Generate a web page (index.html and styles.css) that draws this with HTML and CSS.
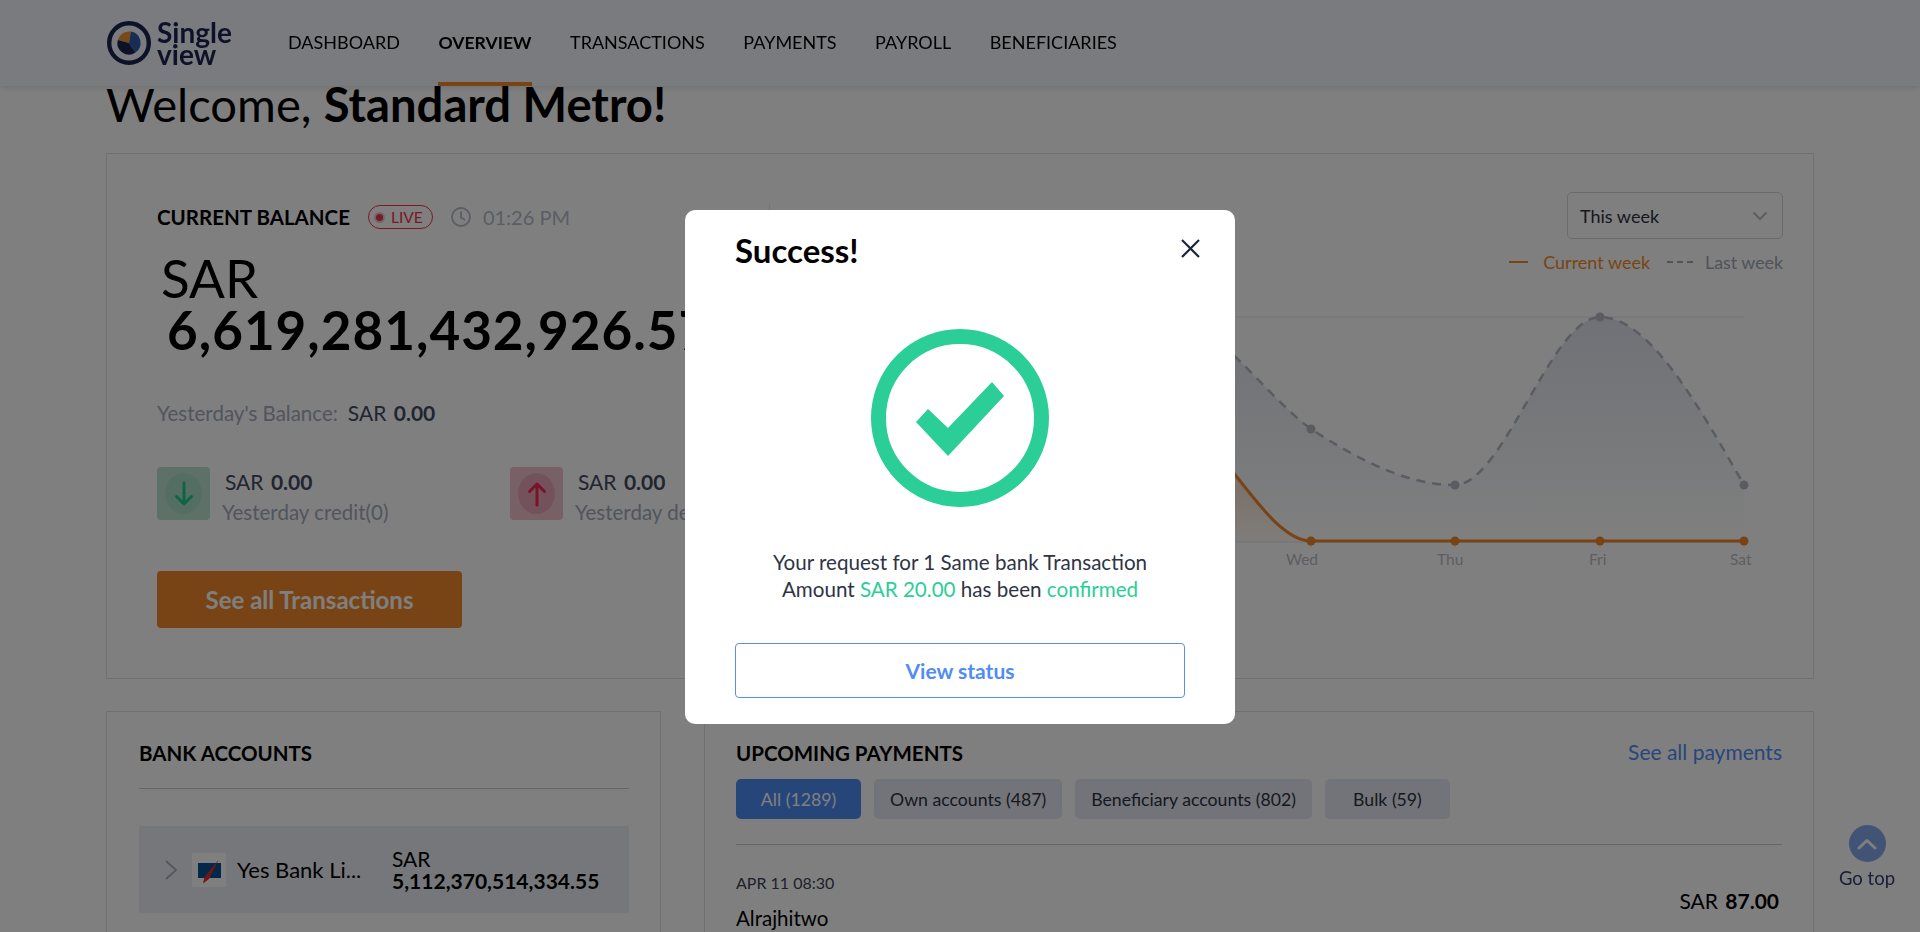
FILE: index.html
```html
<!DOCTYPE html>
<html lang="en">
<head>
<meta charset="utf-8">
<title>Single view - Overview</title>
<link rel="stylesheet" href="styles.css">
</head>
<body>
<header class="topbar">
  <div class="logo">
    <svg class="logo-mark" width="46" height="46" viewBox="0 0 46 46">
      <circle cx="23" cy="23" r="19.8" fill="none" stroke="#1c2550" stroke-width="4.400"/>
      <path d="M23 23 L11.800 20 A11.600 11.600 0 0 1 25 11.600 Z" fill="#f59331"/>
      <path d="M23 23 L25 11.600 A11.600 11.600 0 0 1 29.500 32.600 Z" fill="#2f5bab"/>
      <path d="M23 23 L29.500 32.600 A11.600 11.600 0 0 1 11.800 20 Z" fill="#1c2550"/>
    </svg>
    <div class="logo-text">Single<br>view</div>
  </div>
  <nav class="nav">
    <a class="nav-item">DASHBOARD</a>
    <a class="nav-item active">OVERVIEW</a>
    <a class="nav-item">TRANSACTIONS</a>
    <a class="nav-item">PAYMENTS</a>
    <a class="nav-item">PAYROLL</a>
    <a class="nav-item">BENEFICIARIES</a>
  </nav>
</header>

<main class="page">
  <h1 class="welcome">Welcome, <b>Standard Metro!</b></h1>

  <section class="card balance-card">
    <div class="balance-col">
      <div class="balance-head">
        <h2 class="section-title">CURRENT BALANCE</h2>
        <span class="live"><i class="live-dot"></i>LIVE</span>
        <svg class="clock" width="20" height="20" viewBox="0 0 20 20"><circle cx="10" cy="10" r="9" fill="none" stroke="#b4bac8" stroke-width="1.8"/><path d="M10 4.500V10.500L14 13" fill="none" stroke="#b4bac8" stroke-width="1.8"/></svg>
        <span class="time">01:26 PM</span>
      </div>
      <div class="amount">
        <div class="amount-cur">SAR</div>
        <div class="amount-val">6,619,281,432,926.57</div>
      </div>
      <div class="yesterday"><span class="muted">Yesterday's Balance:</span><span class="money">SAR <b>0.00</b></span></div>
      <div class="flows">
        <div class="flow">
          <div class="tile tile-green"><span class="tile-in">
            <svg width="20" height="26" viewBox="0 0 20 26"><path d="M10 2V23M2.500 15.500L10 23L17.500 15.500" fill="none" stroke="#1cc98e" stroke-width="3" stroke-linecap="round" stroke-linejoin="round"/></svg>
          </span></div>
          <div class="flow-text"><div class="flow-amt">SAR <b>0.00</b></div><div class="muted">Yesterday credit(0)</div></div>
        </div>
        <div class="flow">
          <div class="tile tile-red"><span class="tile-in">
            <svg width="20" height="26" viewBox="0 0 20 26"><path d="M10 24V3M2.500 10.500L10 3L17.500 10.500" fill="none" stroke="#f0284f" stroke-width="3" stroke-linecap="round" stroke-linejoin="round"/></svg>
          </span></div>
          <div class="flow-text"><div class="flow-amt">SAR <b>0.00</b></div><div class="muted">Yesterday debit(0)</div></div>
        </div>
      </div>
      <button class="btn-primary">See all Transactions</button>
    </div>

    <div class="chart-col">
      <div class="chart-head">
        <h2 class="section-title">CASH PERFORMANCE</h2>
        <div class="select">This week
          <svg width="16" height="10" viewBox="0 0 16 10"><path d="M1.500 1.500L8 8L14.500 1.500" fill="none" stroke="#b9bcc4" stroke-width="2"/></svg>
        </div>
      </div>
      <div class="legend">
        <span class="leg-line"></span><span class="leg-cur">Current week</span>
        <span class="leg-dash"></span><span class="leg-last">Last week</span>
      </div>
      <svg class="chart" width="981" height="300" viewBox="802 275 981 300">
        <defs>
          <linearGradient id="gGrey" x1="0" y1="0" x2="0" y2="1"><stop offset="0" stop-color="#d6dce8" stop-opacity=".8"/><stop offset="1" stop-color="#d6dce8" stop-opacity="0"/></linearGradient>
          <linearGradient id="gOrange" x1="0" y1="0" x2="0" y2="1"><stop offset="0" stop-color="#f59331" stop-opacity=".35"/><stop offset="1" stop-color="#f59331" stop-opacity=".05"/></linearGradient>
        </defs>
        <path d="M878 316H1744M878 541H1744" stroke="#eef0f5" stroke-width="1.500"/>
        <path d="M1311 541v5M1455 541v5M1600 541v5M1744 541v5" stroke="#d5d8df" stroke-width="1"/>
        <path d="M1166 316C1214 316 1263 393 1311 428C1359 459 1407 484 1455 484C1503 484 1552 316 1600 316C1648 316 1696 400 1744 484V541H1166Z" fill="url(#gGrey)"/>
        <path d="M1166 416C1214 416 1263 540 1311 540V541H1166Z" fill="url(#gOrange)"/>
        <path d="M1166 316C1214 316 1263 393 1311 428C1359 459 1407 484 1455 484C1503 484 1552 316 1600 316C1648 316 1696 400 1744 484" fill="none" stroke="#b4b9c4" stroke-width="2.500" stroke-dasharray="9 7"/>
        <g fill="#b4b9c4"><circle cx="1311" cy="428" r="4.500"/><circle cx="1455" cy="484" r="4.500"/><circle cx="1600" cy="316" r="4.500"/><circle cx="1744" cy="484" r="4.500"/></g>
        <path d="M1166 416C1214 416 1263 540 1311 540H1744" fill="none" stroke="#f0892a" stroke-width="3"/>
        <g fill="#f0892a"><circle cx="1311" cy="540" r="4.500"/><circle cx="1455" cy="540" r="4.500"/><circle cx="1600" cy="540" r="4.500"/><circle cx="1744" cy="540" r="4.500"/></g>
        <g class="tick-labels"><text x="1286" y="564">Wed</text><text x="1437" y="564">Thu</text><text x="1589" y="564">Fri</text><text x="1730" y="564">Sat</text></g>
      </svg>
    </div>
  </section>

  <div class="lower">
    <section class="card accounts">
      <h2 class="section-title">BANK ACCOUNTS</h2>
      <div class="rule rule-accounts"></div>
      <div class="account-row">
        <svg width="14" height="22" viewBox="0 0 14 22"><path d="M2 2L12 11L2 20" fill="none" stroke="#a8adba" stroke-width="1.800"/></svg>
        <span class="bank-logo">
          <svg width="34" height="34" viewBox="0 0 34 34"><rect x="6" y="10" width="23" height="15" fill="#04528f"/><path d="M26.500 7L17 26L11 30.500L12.500 24Z" fill="#e62a2a"/></svg>
        </span>
        <span class="bank-name">Yes Bank Li...</span>
        <div class="bank-amt">SAR<br><b>5,112,370,514,334.55</b></div>
      </div>
    </section>

    <section class="card upcoming">
      <div class="up-head">
        <h2 class="section-title">UPCOMING PAYMENTS</h2>
        <a class="see-all">See all payments</a>
      </div>
      <div class="pills">
        <span class="pill pill-on">All (1289)</span>
        <span class="pill">Own accounts (487)</span>
        <span class="pill">Beneficiary accounts (802)</span>
        <span class="pill">Bulk (59)</span>
      </div>
      <div class="rule rule-up"></div>
      <div class="pay-row">
        <div><div class="pay-date">APR 11 08:30</div><div class="pay-name">Alrajhitwo</div></div>
        <div class="pay-amt">SAR <b>87.00</b></div>
      </div>
    </section>
  </div>
</main>

<a class="go-top">
  <span class="go-top-dot"><svg width="20" height="12" viewBox="0 0 20 12"><path d="M2 10L10 2.500L18 10" fill="none" stroke="#fff" stroke-width="3" stroke-linecap="round" stroke-linejoin="round"/></svg></span>
  Go top
</a>

<div class="overlay">
  <div class="modal">
    <div class="modal-head">
      <h2 class="modal-title">Success!</h2>
      <svg class="modal-close" width="21" height="21" viewBox="0 0 21 21"><path d="M2 2L19 19M19 2L2 19" fill="none" stroke="#1d2440" stroke-width="2.200"/></svg>
    </div>
    <svg class="tick" width="178" height="178" viewBox="0 0 178 178">
      <circle cx="89" cy="89" r="81.500" fill="none" stroke="#2bce97" stroke-width="15"/>
      <path d="M45 93L57 80L77 99L121 53L133 67L77 127Z" fill="#2bce97"/>
    </svg>
    <p class="modal-msg">Your request for 1 Same bank Transaction<br>Amount <span class="ok">SAR 20.00</span> has been <span class="ok">confirmed</span></p>
    <button class="btn-outline">View status</button>
  </div>
</div>
</body>
</html>
```

FILE: styles.css
```css
* { box-sizing: border-box; }
html, body { margin: 0; height: 932px; overflow: hidden; }
body { background: #fff; color: #000; font-family: Lato, "Noto Sans", sans-serif; font-size: 20.500px; }
h1, h2, p { margin: 0; }

.topbar { position: fixed; top: 0; left: 0; right: 0; height: 86px; z-index: 2; display: flex; padding-left: 106px; background: #f4f7ff; box-shadow: 0 2px 6px rgba(0,0,0,.12); }
.logo { width: 182px; display: flex; align-items: center; gap: 5px; }
.logo-text { font-size: 28px; line-height: 22px; font-weight: 700; color: #1c2550; }
.nav { display: flex; gap: 38.500px; }
.nav-item { height: 86px; display: flex; align-items: center; padding-top: 2px; border-bottom: 4px solid transparent; font-size: 18px; color: #000; }
.nav-item.active { font-size: 17.600px; font-weight: 700; border-bottom-color: #f0892a; }

.page { padding: 77px 106px 0 106px; }
.welcome { font-size: 47.200px; line-height: 54px; font-weight: 400; margin-bottom: 22px; }
.welcome b { font-weight: 700; }
.card { border: 1px solid #dfe1e6; }
.section-title { font-size: 20.500px; line-height: 26px; font-weight: 700; white-space: nowrap; }

.balance-card { display: flex; height: 526px; padding: 38px 31px 0 50px; }
.balance-col { width: 613px; flex: none; margin: 12px 32px 0 0; height: 424px; border-right: 1px solid #e7e9ee; }
.balance-head { display: flex; align-items: center; height: 26px; }
.live { display: flex; align-items: center; gap: 8px; width: 65px; height: 24px; margin-left: 18px; padding-left: 7px; border: 1px solid #f0324f; border-radius: 12px; color: #f0324f; font-size: 15.500px; }
.live-dot { width: 7px; height: 7px; border-radius: 50%; background: #f0324f; box-shadow: 0 0 0 2px #e9c8d0; }
.clock { margin-left: 18px; }
.time { margin-left: 12px; color: #b4bac8; font-size: 20px; }
.amount { margin: 22px 0 0 4px; font-size: 53px; line-height: 52px; white-space: nowrap; }
.amount-val { margin-left: 6px; font-weight: 700; letter-spacing: 1px; }
.yesterday { margin-top: 45px; display: flex; gap: 10px; line-height: 24px; }
.muted { color: #a4aab9; }
.money, .flow-amt { color: #434a5e; font-size: 21px; word-spacing: 2px; }
.flows { margin-top: 42px; display: flex; }
.flow { width: 353px; flex: none; display: flex; gap: 12px; white-space: nowrap; }
.tile { width: 53px; height: 53px; border-radius: 4px; display: flex; align-items: center; justify-content: center; }
.tile-green { background: #bde3d3; }
.tile-red { background: #efc3cd; }
.tile-in { width: 37px; height: 41px; border-radius: 50%; display: flex; align-items: center; justify-content: center; }
.tile-green .tile-in { background: #a9ddc7; }
.tile-red .tile-in { background: #e9a5b6; }
.flow-text { line-height: 30px; }
.flow-amt { margin-left: 3px; }
.btn-primary { display: block; margin-top: 44px; width: 305px; height: 57px; border: 0; border-radius: 4px; background: #f0892a; color: #fff; font: 700 24px Lato, sans-serif; }

.chart-col { flex: 1; display: flex; flex-direction: column; }
.chart-head { display: flex; justify-content: space-between; align-items: flex-start; }
.chart-head .section-title { margin-top: 12px; }
.select { width: 216px; height: 47px; display: flex; align-items: center; justify-content: space-between; padding: 0 14px 0 12px; border: 1px solid #d3d7e2; border-radius: 5px; background: #fff; font-size: 18px; color: #2c3140; }
.legend { margin-top: 11px; height: 24px; display: flex; align-items: center; justify-content: flex-end; font-size: 18px; }
.leg-line { width: 19px; height: 2px; background: #f0892a; }
.leg-cur { margin-left: 15px; color: #f0892a; }
.leg-dash { width: 26px; height: 2px; margin-left: 17px; background: repeating-linear-gradient(90deg, #a0a6b5 0 6px, transparent 6px 10px); }
.leg-last { margin-left: 12px; color: #a0a6b5; font-size: 17.800px; }
.chart { display: block; margin-top: 2px; flex: none; }
.tick-labels { font-size: 15.500px; fill: #b8bdc8; }

.lower { display: flex; gap: 43px; margin-top: 32px; }
.accounts { width: 555px; height: 420px; flex: none; padding: 28px 31px 0 32px; }
.rule { height: 1px; background: #c9ccd3; }
.rule-accounts { margin-top: 22px; }
.account-row { margin-top: 37px; height: 87px; display: flex; align-items: center; background: #eceff5; padding-left: 25px; }
.bank-logo { width: 34px; height: 34px; margin-left: 14px; background: #fff; display: block; }
.bank-logo svg { display: block; }
.bank-name { margin-left: 11px; width: 155px; white-space: nowrap; font-size: 22px; padding-bottom: 1px; }
.bank-amt { font-size: 21px; line-height: 22px; white-space: nowrap; }
.bank-amt b { font-weight: 700; }

.upcoming { flex: 1; height: 420px; padding: 28px 31px 0; }
.up-head { display: flex; justify-content: space-between; height: 39px; }
.see-all { color: #4f8cf5; font-size: 21px; line-height: 24px; }
.pills { display: flex; gap: 13px; }
.pill { min-width: 125px; height: 40px; padding: 0 16px; display: flex; align-items: center; justify-content: center; border-radius: 5px; background: #e6e9f2; color: #2c3140; font-size: 17.700px; white-space: nowrap; }
.pill-on { background: #4c8cf5; color: #fff; }
.rule-up { margin-top: 25px; }
.pay-row { margin-top: 28px; padding-right: 3px; display: flex; justify-content: space-between; align-items: center; }
.pay-date { font-size: 16px; line-height: 20px; color: #3c4254; }
.pay-name { margin-top: 13px; line-height: 24px; }
.pay-amt { font-size: 21px; word-spacing: 2px; padding-bottom: 3px; }
.pay-amt b { font-weight: 700; }

.go-top { position: fixed; left: 1839px; top: 825px; width: 56px; display: flex; flex-direction: column; align-items: center; gap: 4px; font-size: 18.500px; line-height: 24px; color: #33406f; white-space: nowrap; z-index: 1; }
.go-top-dot { width: 37px; height: 37px; border-radius: 50%; background: #82a8ea; display: flex; align-items: center; justify-content: center; }

.overlay { position: fixed; inset: 0; z-index: 3; padding-top: 2px; display: flex; align-items: center; justify-content: center; background: rgba(0,0,0,.5); }
.modal { width: 550px; height: 514px; padding: 15px 50px 0; background: #fff; border-radius: 10px; display: flex; flex-direction: column; }
.modal-head { height: 50px; display: flex; align-items: center; justify-content: space-between; }
.modal-title { font-size: 33px; font-weight: 700; }
.modal-close { margin: -3px -16px 0 0; }
.tick { margin: 54px auto 0; display: block; flex: none; }
.modal-msg { margin-top: 42px; text-align: center; font-size: 20.600px; line-height: 27px; color: #2e3445; }
.ok { color: #2bce97; }
.btn-outline { margin-top: 40px; height: 55px; width: 100%; flex: none; background: #fff; border: 1px solid #5b8df0; border-radius: 4px; color: #4f8cf5; font: 700 21px Lato, sans-serif; }
```
